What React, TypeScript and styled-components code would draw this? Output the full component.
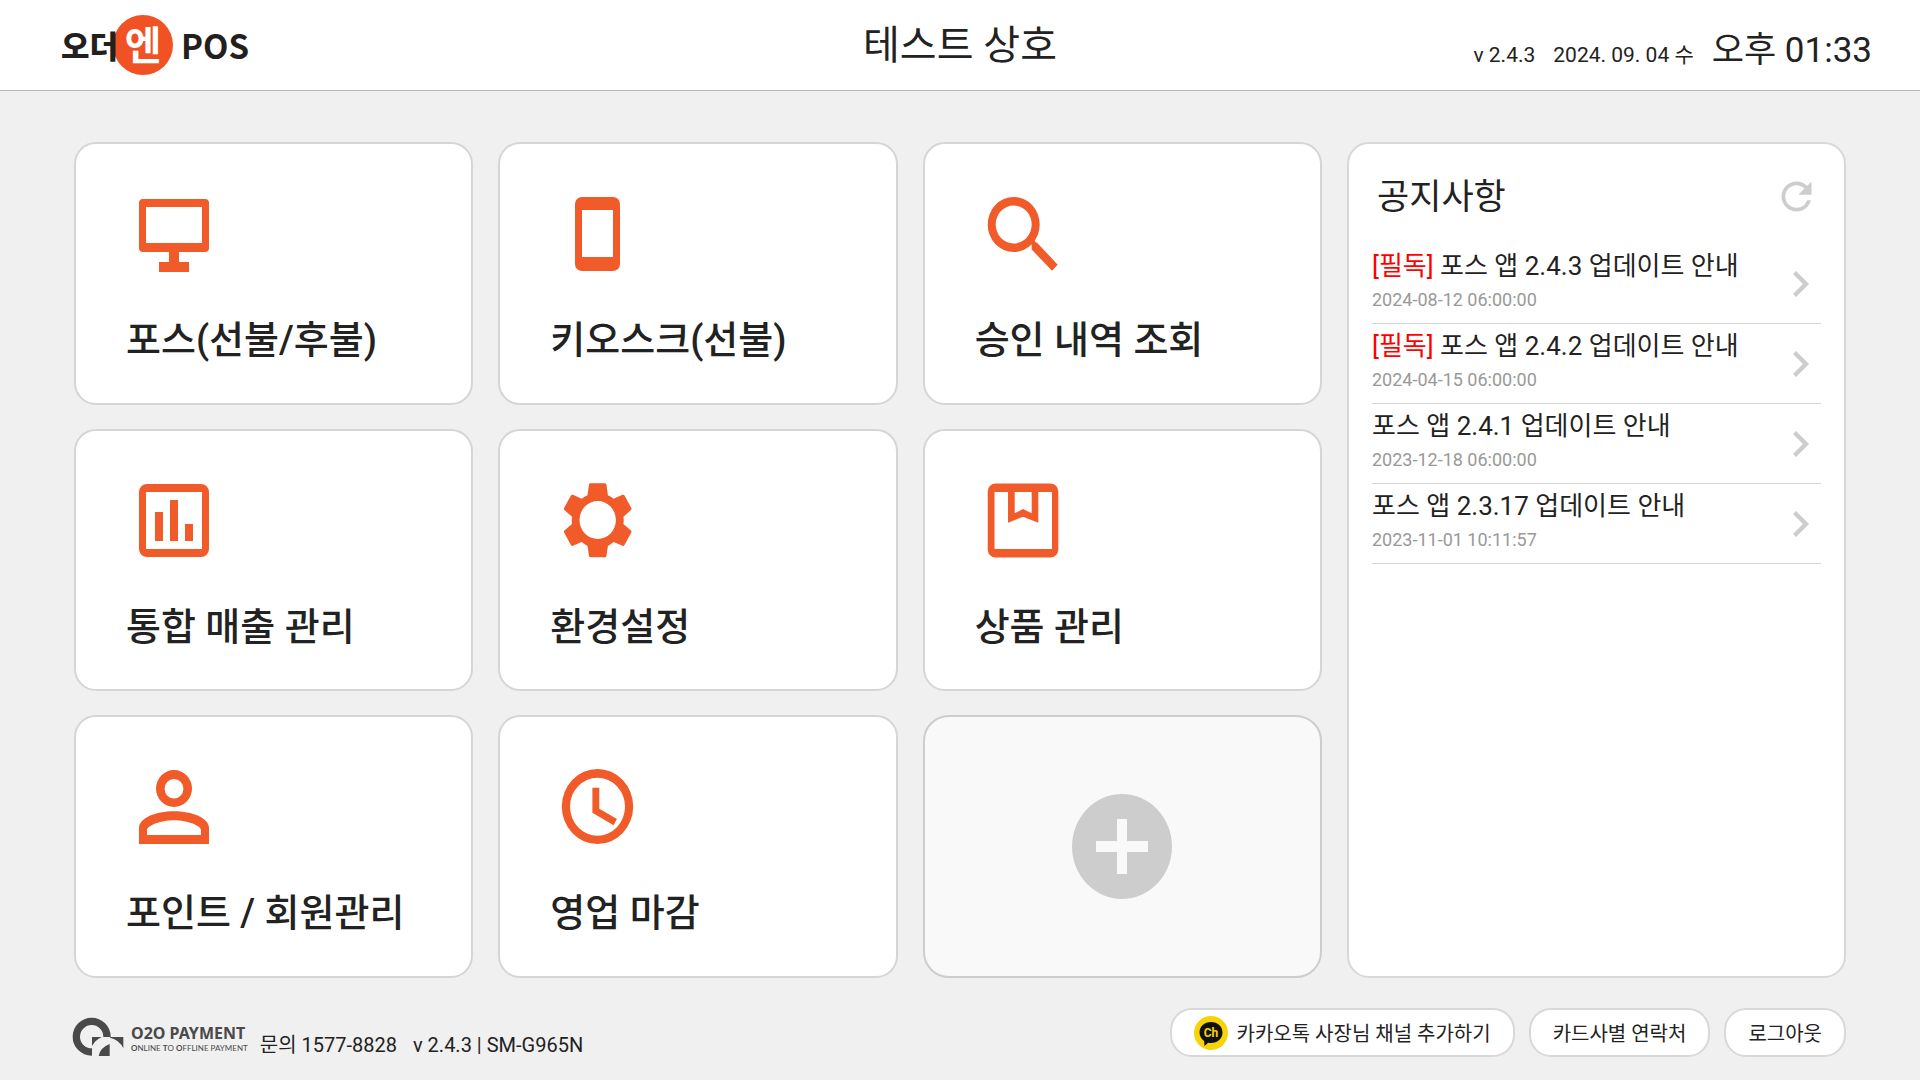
import React from "react";
import styled, { createGlobalStyle } from "styled-components";
import { MdRefresh } from "react-icons/md";

const ORANGE = "#f15a29";
const INK = "#222222";

const GlobalStyle = createGlobalStyle`
  *, *::before, *::after { box-sizing: border-box; }
  body {
    margin: 0;
    background: #f0f0f0;
    color: ${INK};
    font-family: Roboto, "Noto Sans CJK KR", sans-serif;
  }
  button { font: inherit; color: inherit; cursor: pointer; }
  a { color: inherit; text-decoration: none; }
  h1, h2, p, ul { margin: 0; padding: 0; font-weight: 400; }
  svg { display: block; flex: none; }
`;

const Page = styled.div`
  min-height: 100vh;
  display: flex;
  flex-direction: column;
`;

const Header = styled.header`
  display: grid;
  grid-template-columns: 1fr auto 1fr;
  align-items: center;
  height: 91px;
  padding: 0 48px;
  background: #ffffff;
  border-bottom: 1px solid #b8b8b8;
`;

const Brand = styled.a`
  display: flex;
  align-items: center;
  padding-left: 13px;
  font-family: "Noto Sans CJK KR", sans-serif;
  color: #231f20;
  line-height: 60px;
`;

const BrandName = styled.span`
  position: relative;
  z-index: 1;
  font-size: 31px;
  font-weight: 900;
`;

const BrandDisc = styled.span`
  width: 60px;
  height: 60px;
  margin-left: -5px;
  border-radius: 50%;
  background: #f15223;
  color: #ffffff;
  font-size: 40px;
  font-weight: 700;
  line-height: 56px;
  text-align: center;
`;

const BrandSuffix = styled.span`
  margin-left: 8px;
  font-size: 33px;
  font-weight: 700;
  line-height: 56px;
`;

const StoreName = styled.h1`
  padding-top: 2px;
  font-size: 40px;
  line-height: 48px;
`;

const Status = styled.div`
  display: flex;
  justify-content: flex-end;
  align-items: baseline;
  gap: 18px;
  padding-top: 16px;
  font-size: 21px;
  line-height: 48px;
`;

const Clock = styled.time`
  font-size: 35px;
`;

const Main = styled.main`
  flex: 1;
  display: grid;
  grid-template-columns: repeat(3, 1fr) 499px;
  grid-template-rows: repeat(3, 1fr);
  gap: 24px 25px;
  padding: 51px 74px 0;
`;

const Card = styled.button`
  display: flex;
  flex-direction: column;
  align-items: flex-start;
  padding: 50px 50px 0;
  background: #ffffff;
  border: 2px solid #d5d5d5;
  border-radius: 22px;
  text-align: left;
`;

const CardIcon = styled.svg`
  width: 80px;
  height: 80px;
  margin-left: 8px;
  fill: ${ORANGE};
  fill-rule: evenodd;
`;

const CardLabel = styled.span`
  margin-top: 38px;
  font-size: 38px;
  font-weight: 500;
  line-height: 56px;
`;

const AddCard = styled(Card)`
  align-items: center;
  justify-content: center;
  padding: 0;
  background: #f9f9f9;
  border-color: #cdcdcd;
  border-radius: 26px;
`;

const Notices = styled.section`
  grid-column: 4;
  grid-row: 1 / span 3;
  padding: 24px 23px;
  background: #ffffff;
  border: 2px solid #d8d8d8;
  border-radius: 22px;
`;

const NoticesHead = styled.div`
  display: flex;
  align-items: center;
  justify-content: space-between;
  height: 56px;
  margin-bottom: 20px;
  padding: 0 2px 0 5px;
`;

const NoticesTitle = styled.h2`
  padding-top: 3px;
  font-size: 35px;
  line-height: 56px;
`;

const RefreshButton = styled.button`
  padding: 0;
  border: 0;
  background: none;
  color: #cdcdcd;
  font-size: 45px;
`;

const NoticeList = styled.ul`
  list-style: none;
`;

const NoticeLink = styled.a`
  display: flex;
  align-items: center;
  justify-content: space-between;
  height: 80px;
  padding-right: 12px;
  border-bottom: 1px solid #d5d5d5;
`;

const NoticeText = styled.div`
  padding-bottom: 8px;
`;

const NoticeTitle = styled.p`
  font-size: 26px;
  line-height: 40px;
`;

const Required = styled.span`
  color: #ff0000;
`;

const NoticeDate = styled.time`
  display: block;
  color: #999999;
  font-size: 18px;
  line-height: 28px;
`;

const Footer = styled.footer`
  display: flex;
  align-items: center;
  justify-content: space-between;
  padding: 30px 74px 23px 72px;
`;

const Company = styled.div`
  display: flex;
  align-items: center;
  gap: 12px;
  padding-top: 8px;
`;

const CompanyLogo = styled.div`
  display: flex;
  align-items: center;
  gap: 6px;
  color: #4a4a4a;
`;

const CompanyText = styled.div`
  padding-top: 4px;
`;

const CompanyName = styled.div`
  font-family: "Noto Sans", sans-serif;
  font-size: 16px;
  font-weight: 700;
  line-height: 18px;
`;

const CompanyTagline = styled.div`
  font-family: Lato, sans-serif;
  font-size: 8px;
  line-height: 12px;
`;

const Contacts = styled.div`
  display: flex;
  gap: 16px;
  padding-top: 16px;
  font-size: 20px;
  line-height: 24px;
`;

const Actions = styled.nav`
  display: flex;
  gap: 14px;
`;

const PillButton = styled.button`
  display: flex;
  align-items: center;
  gap: 9px;
  height: 49px;
  padding: 0 22px;
  background: #ffffff;
  border: 2px solid #d8d8d8;
  border-radius: 22px;
  font-size: 20px;
`;

const icons = {
  monitor: (
    <path d="M9 5h62a4 4 0 0 1 4 4v45a4 4 0 0 1-4 4H45v10h10v10H25V68h10V58H9a4 4 0 0 1-4-4V9a4 4 0 0 1 4-4ZM12 13v36h56V13Z" />
  ),
  phone: (
    <path d="M24 3h31a7 7 0 0 1 7 7v60a7 7 0 0 1-7 7H24a7 7 0 0 1-7-7V10a7 7 0 0 1 7-7ZM24 16v47h31V16Z" />
  ),
  search: (
    <>
      <path d="M30.700 3a26 27.500 0 1 0 0 55a26 27.500 0 1 0 0-55ZM30.700 11.500a18 19 0 1 1 0 38a18 19 0 1 1 0-38Z" />
      <path d="M46 48l3-3 6 4.700 19.700 21-5.700 6L48.700 55.500V50Z" />
    </>
  ),
  chart: (
    <>
      <path d="M13 3h54a8 8 0 0 1 8 8v57a8 8 0 0 1-8 8H13a8 8 0 0 1-8-8V11a8 8 0 0 1 8-8ZM12 11v57h56V11Z" />
      <path d="M21 31h8v29h-8ZM36 19h8v41h-8ZM51 43h8v17h-8Z" />
    </>
  ),
  gear: (
    <path d="M32.500 2.300H47a1.500 1.500 0 0 1 1.400 1.300L49.900 14.300Q53 15.500 55.600 17.700L64.500 13.800Q65.800 13.400 66.500 14.500L73.300 27Q73.900 28.200 73 29L65.400 35.700Q66 39.300 65.400 43L73 49.600Q73.900 50.400 73.300 51.500L66.500 64Q65.800 65.200 64.500 64.800L55.600 61Q53 63.200 49.900 65L48.400 75Q48.200 76.200 47 76.300H32.400Q31.200 76.200 31 75L29.500 65Q26.400 63.200 23.800 61L14.900 64.800Q13.600 65.200 12.900 64L6.100 51.500Q5.500 50.400 6.400 49.600L14 43Q13.400 39.300 14 35.700L6.400 29Q5.500 28.200 6.100 27L12.900 14.500Q13.600 13.400 14.900 13.800L23.800 17.700Q26.400 15.500 29.500 14.300L31 3.600A1.500 1.500 0 0 1 32.500 2.300ZM39.700 20a18.200 19 0 1 0 0 38a18.200 19 0 1 0 0-38Z" />
  ),
  box: (
    <>
      <path d="M12.700 2.500h54.600a8 8 0 0 1 8 8v58a8 8 0 0 1-8 8H12.700a8 8 0 0 1-8-8v-58a8 8 0 0 1 8-8ZM11.500 11v57H69V11Z" />
      <path d="M25 9h6.700v23.300L40 28l8.700 4.300V9h6.600v32.700L40 35.700 25 41.700Z" />
    </>
  ),
  person: (
    <>
      <path d="M40 3a18 18.500 0 1 0 0 37a18 18.500 0 1 0 0-37ZM40 12a9.400 9.800 0 1 1 0 19.600a9.400 9.800 0 1 1 0-19.600Z" />
      <path d="M5 77V61C5 51 22 44.300 40 44.300S75 51 75 61v16ZM13 68h54v-5c0-4-13-9.700-27-9.700S13 59 13 63Z" />
    </>
  ),
  clock: (
    <>
      <path d="M39.500 2a35.700 37.500 0 1 0 0 75a35.700 37.500 0 1 0 0-75ZM39.500 10.700a27.500 29 0 1 1 0 58a27.500 29 0 1 1 0-58Z" />
      <path d="M34.400 20.700h6.900v21L58.900 52l-3.300 6.300L34.400 45.700Z" />
    </>
  ),
};

const menu: { icon: keyof typeof icons; label: string }[] = [
  { icon: "monitor", label: "포스(선불/후불)" },
  { icon: "phone", label: "키오스크(선불)" },
  { icon: "search", label: "승인 내역 조회" },
  { icon: "chart", label: "통합 매출 관리" },
  { icon: "gear", label: "환경설정" },
  { icon: "box", label: "상품 관리" },
  { icon: "person", label: "포인트 / 회원관리" },
  { icon: "clock", label: "영업 마감" },
];

const notices = [
  { required: true, title: "포스 앱 2.4.3 업데이트 안내", date: "2024-08-12 06:00:00" },
  { required: true, title: "포스 앱 2.4.2 업데이트 안내", date: "2024-04-15 06:00:00" },
  { required: false, title: "포스 앱 2.4.1 업데이트 안내", date: "2023-12-18 06:00:00" },
  { required: false, title: "포스 앱 2.3.17 업데이트 안내", date: "2023-11-01 10:11:57" },
];

const Chevron = () => (
  <svg width="16" height="26" viewBox="8.59 6 7.41 12" fill="#cdcdcd" aria-hidden="true">
    <path d="M10 6 8.590 7.410 13.170 12l-4.580 4.590L10 18l6-6z" />
  </svg>
);

const CompanyMark = () => (
  <svg width="53" height="39" viewBox="18 36 159 117" aria-hidden="true">
    <circle cx="77" cy="95" r="46" fill="none" stroke="#4a4a4a" strokeWidth="22" />
    <path d="M78 96h94v57H78z" fill="#f0f0f0" />
    <path d="M78 96h29Q88 105 78 123Z" fill="#4a4a4a" />
    <path d="M132 96h40v34Q160 104 132 98Z" fill="#4a4a4a" />
    <path d="M131 117v36H98Q102 128 131 117Z" fill="#4a4a4a" />
  </svg>
);

const KakaoChannel = () => (
  <svg width="34" height="34" viewBox="0 0 34 34" aria-hidden="true">
    <circle cx="17" cy="17" r="17" fill="#f7d308" />
    <path d="M17 6c6.600 0 11.500 4.600 11.500 10.500S23.600 27 17 27c-1 0-2 0-2.800-.3L10.500 30l-.4-5C7.300 23 5.500 20 5.500 16.500 5.500 10.600 10.400 6 17 6Z" fill="#111111" />
    <text x="17" y="21" textAnchor="middle" fontFamily="Roboto, sans-serif" fontSize="12" fontWeight="700" fill="#f7d308">
      Ch
    </text>
  </svg>
);

export default function App() {
  return (
    <Page>
      <GlobalStyle />
      <Header>
        <Brand href="#">
          <BrandName>오더</BrandName>
          <BrandDisc>엔</BrandDisc>
          <BrandSuffix>POS</BrandSuffix>
        </Brand>
        <StoreName>테스트 상호</StoreName>
        <Status>
          <span>v 2.4.3</span>
          <span>2024. 09. 04 수</span>
          <Clock>오후 01:33</Clock>
        </Status>
      </Header>

      <Main>
        {menu.map(({ icon, label }) => (
          <Card key={label} type="button">
            <CardIcon viewBox="0 0 80 80" aria-hidden="true">
              {icons[icon]}
            </CardIcon>
            <CardLabel>{label}</CardLabel>
          </Card>
        ))}
        <AddCard type="button" aria-label="메뉴 추가">
          <svg width="100" height="105" viewBox="0 0 100 105" aria-hidden="true">
            <ellipse cx="50" cy="52.500" rx="50" ry="52.500" fill="#cdcdcd" />
            <path d="M45 25h10v22h21v11H55v22H45V58H24V47h21Z" fill="#f9f9f9" />
          </svg>
        </AddCard>

        <Notices>
          <NoticesHead>
            <NoticesTitle>공지사항</NoticesTitle>
            <RefreshButton type="button" aria-label="새로고침">
              <MdRefresh />
            </RefreshButton>
          </NoticesHead>
          <NoticeList>
            {notices.map((n) => (
              <li key={n.title}>
                <NoticeLink href="#">
                  <NoticeText>
                    <NoticeTitle>
                      {n.required && <Required>[필독] </Required>}
                      {n.title}
                    </NoticeTitle>
                    <NoticeDate>{n.date}</NoticeDate>
                  </NoticeText>
                  <Chevron />
                </NoticeLink>
              </li>
            ))}
          </NoticeList>
        </Notices>
      </Main>

      <Footer>
        <Company>
          <CompanyLogo>
            <CompanyMark />
            <CompanyText>
              <CompanyName>O2O PAYMENT</CompanyName>
              <CompanyTagline>
                <b>O</b>NLINE <b>T</b>O <b>O</b>FFLINE PAYMENT
              </CompanyTagline>
            </CompanyText>
          </CompanyLogo>
          <Contacts>
            <p>문의 1577-8828</p>
            <p>v 2.4.3 | SM-G965N</p>
          </Contacts>
        </Company>
        <Actions>
          <PillButton type="button">
            <KakaoChannel />
            카카오톡 사장님 채널 추가하기
          </PillButton>
          <PillButton type="button">카드사별 연락처</PillButton>
          <PillButton type="button">로그아웃</PillButton>
        </Actions>
      </Footer>
    </Page>
  );
}
